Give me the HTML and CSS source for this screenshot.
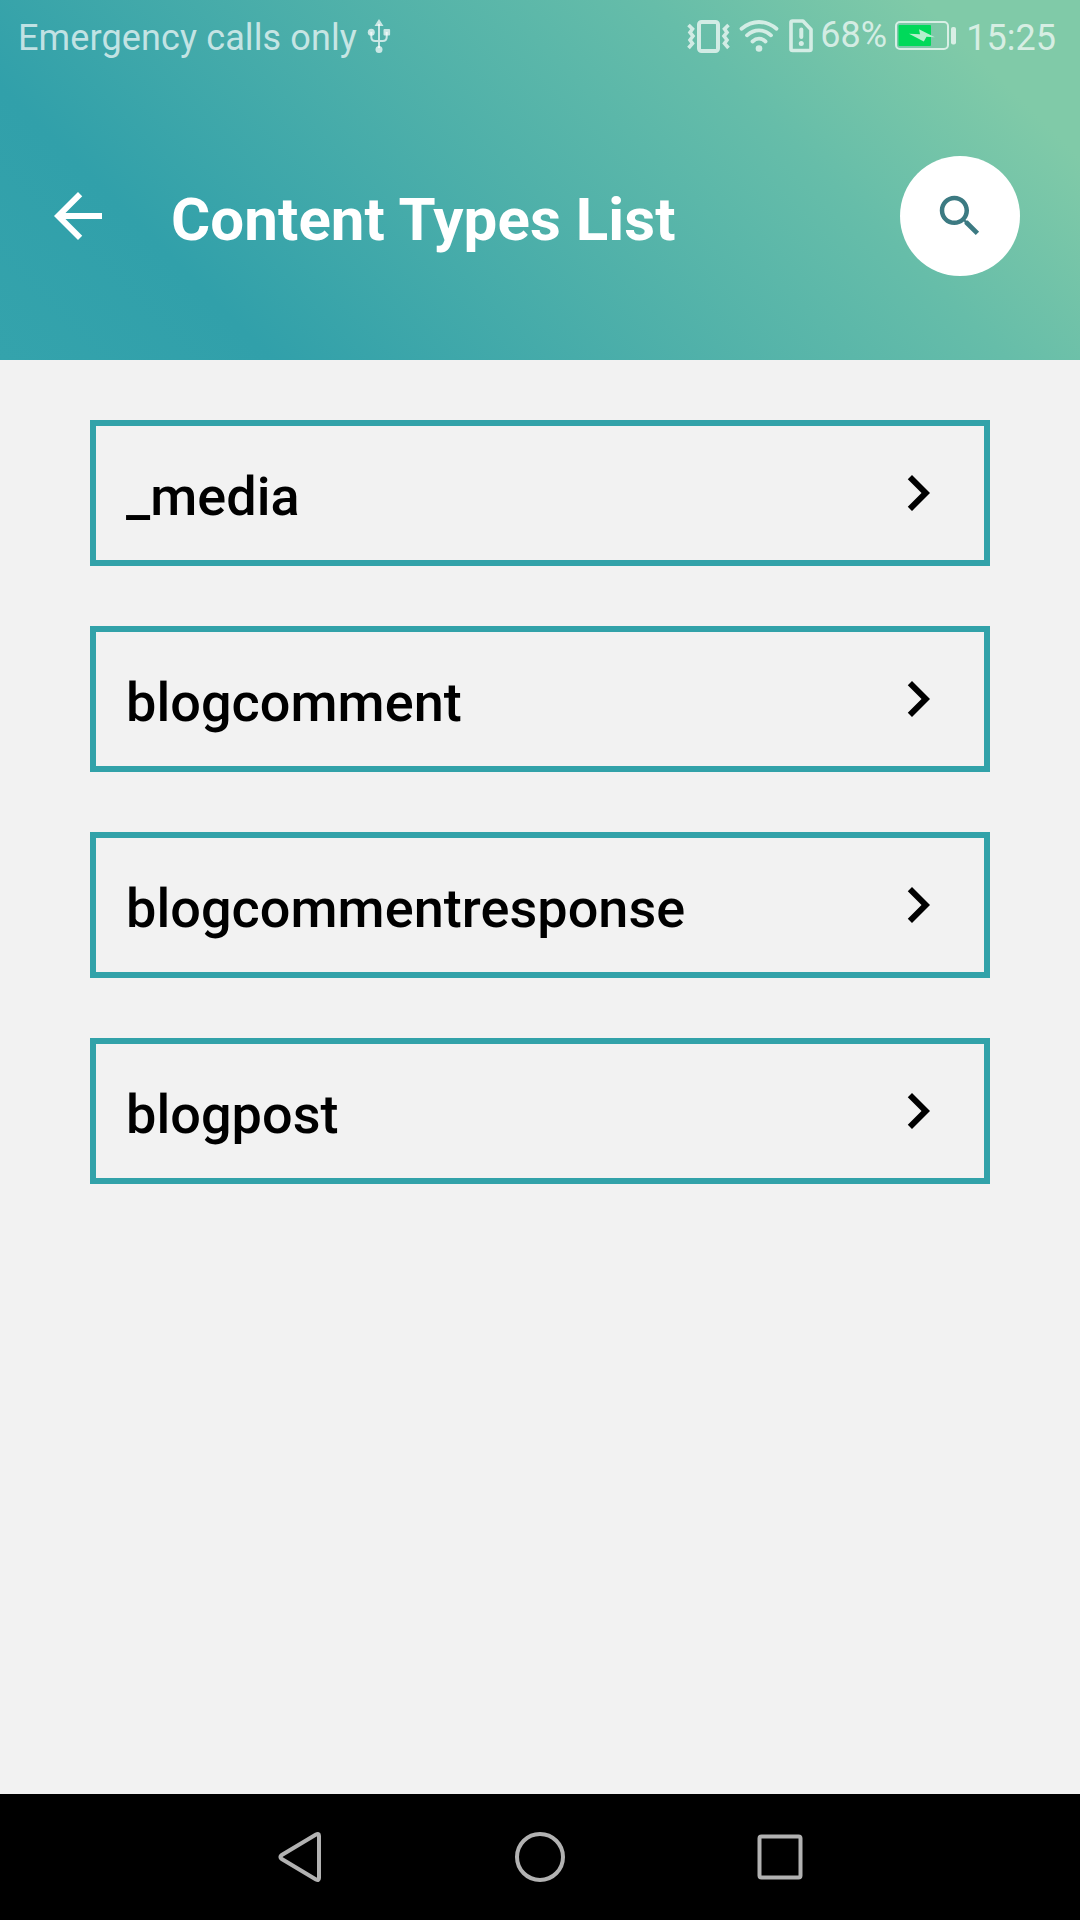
FILE: index.html
```html
<!DOCTYPE html>
<html lang="en">
<head>
<meta charset="utf-8">
<title>Content Types List</title>
<link rel="stylesheet" href="styles.css">
</head>
<body>
<div class="screen">
  <header class="header">
    <div class="status-bar">
      <span class="carrier">Emergency calls only</span>
      <svg class="icon-usb" viewBox="0 0 24 36" width="24" height="36">
        <g fill="none" stroke="currentColor" stroke-width="2">
          <path d="M12 6v24M4.300 14v5q0 4 4 4h7.400q4 0 4-4v-5"/>
        </g>
        <path fill="currentColor" d="M12 1l4.500 7h-9z"/>
        <circle fill="currentColor" cx="4.300" cy="14.300" r="3.500"/>
        <rect fill="currentColor" x="16.500" y="11" width="6.600" height="6.600" rx="1"/>
        <circle fill="currentColor" cx="12" cy="31.500" r="3.500"/>
      </svg>
      <span class="spacer"></span>
      <svg class="icon-vibrate" viewBox="0 0 44 36" width="44" height="36">
        <rect x="12" y="4" width="19" height="29" rx="2.500" fill="none" stroke="currentColor" stroke-width="4"/>
        <g fill="none" stroke="currentColor" stroke-width="3.600">
          <path d="M1.500 7l4 4-2.500 3.500 3 3.500-3 4 2.500 3.500-4 4.500"/>
          <path d="M41.500 7l-4 4 2.500 3.500-3 3.500 3 4-2.500 3.500 4 4.500"/>
        </g>
      </svg>
      <svg class="icon-wifi" viewBox="0 0 40 36" width="40" height="36">
        <g fill="none" stroke="currentColor" stroke-width="3.800" stroke-linecap="round">
          <path d="M2.500 10.700Q11 4 20 4T37.500 10.700"/>
          <path d="M8 17.300Q13.500 12.300 20 12.300T32 17.300"/>
          <path d="M13.500 23.500Q16.500 20.700 20 20.700T26.500 23.500"/>
        </g>
        <circle fill="currentColor" cx="20" cy="30.500" r="3.300"/>
      </svg>
      <svg class="icon-sim" viewBox="0 0 26 36" width="26" height="36">
        <path d="M4.500 3h10.500L23 11.500V31q0 1.500-1.500 1.500H4.500Q3 32.500 3 31V4.500Q3 3 4.500 3z" fill="none" stroke="currentColor" stroke-width="3.600" stroke-linejoin="round"/>
        <path d="M13.300 11.500v7.500" stroke="currentColor" stroke-width="4" stroke-linecap="round"/>
        <circle fill="currentColor" cx="13.300" cy="25.500" r="2.500"/>
      </svg>
      <span class="percent">68%</span>
      <svg class="icon-battery" viewBox="0 0 62 30" width="62" height="30">
        <rect x="1" y="1" width="52" height="27" rx="4" fill="none" stroke="currentColor" stroke-width="2"/>
        <rect x="56" y="6" width="5" height="17.500" rx="2" fill="currentColor"/>
        <rect class="charge" x="3.500" y="4" width="32.500" height="21" rx="1"/>
        <path class="bolt" d="M14 12.700l11 .5-1-5 9.500 4.800 6.500 3.300-8.500-.5-2.700 4.700z"/>
      </svg>
      <span class="clock">15:25</span>
    </div>
    <div class="toolbar">
      <svg class="icon-back" viewBox="0 0 24 24" width="72" height="72"><path fill="currentColor" d="M20 11H7.830l5.590-5.590L12 4l-8 8 8 8 1.410-1.410L7.830 13H20v-2z"/></svg>
      <h1 class="title">Content Types List</h1>
      <button class="search" aria-label="Search">
        <svg viewBox="0 0 24 24" width="54" height="54"><path fill="currentColor" d="M15.500 14h-.790l-.280-.270C15.410 12.590 16 11.110 16 9.500 16 5.910 13.090 3 9.500 3S3 5.910 3 9.500 5.910 16 9.500 16c1.610 0 3.090-.590 4.230-1.570l.270.280v.790l5 4.990L20.490 19l-4.990-5zm-6 0C7.010 14 5 11.990 5 9.500S7.010 5 9.500 5 14 7.010 14 9.500 11.990 14 9.500 14z"/></svg>
      </button>
    </div>
  </header>
  <main class="list">
    <a class="item"><span class="label">_media</span><svg viewBox="0 0 24 24" width="72" height="72"><path d="M8.590 16.590L13.170 12 8.590 7.410 10 6l6 6-6 6z"/></svg></a>
    <a class="item"><span class="label">blogcomment</span><svg viewBox="0 0 24 24" width="72" height="72"><path d="M8.590 16.590L13.170 12 8.590 7.410 10 6l6 6-6 6z"/></svg></a>
    <a class="item"><span class="label">blogcommentresponse</span><svg viewBox="0 0 24 24" width="72" height="72"><path d="M8.590 16.590L13.170 12 8.590 7.410 10 6l6 6-6 6z"/></svg></a>
    <a class="item"><span class="label">blogpost</span><svg viewBox="0 0 24 24" width="72" height="72"><path d="M8.590 16.590L13.170 12 8.590 7.410 10 6l6 6-6 6z"/></svg></a>
  </main>
  <nav class="nav-bar">
    <svg viewBox="0 0 60 60" width="60" height="60"><path d="M36 7.600Q39 6 39 9V51Q39 54 36 52.400L1.800 32Q-1 30 1.800 28z" transform="translate(10 0)"/></svg>
    <svg viewBox="0 0 60 60" width="60" height="60"><circle cx="30" cy="30" r="23"/></svg>
    <svg viewBox="0 0 60 60" width="60" height="60"><rect x="9.500" y="9.500" width="41" height="41" rx="2"/></svg>
  </nav>
</div>
</body>
</html>
```
FILE: styles.css
```css
* {
  box-sizing: border-box;
}

body {
  margin: 0;
  font-family: Roboto, "Liberation Sans", sans-serif;
}

.screen {
  display: flex;
  flex-direction: column;
  width: 1080px;
  height: 1920px;
  background: #f2f2f2;
}

.header {
  height: 360px;
  background: linear-gradient(45deg, #34a3ac 0%, #31a0aa 19%, #66bda9 70%, #80caa8 89%, #80caa8 100%);
}

.status-bar {
  display: flex;
  align-items: flex-start;
  height: 72px;
  padding: 18px 24px 0 18px;
  color: rgba(255, 255, 255, 0.7);
  font-size: 36px;
  line-height: 40px;
  white-space: nowrap;
}

.carrier {
  letter-spacing: 0.12px;
}

.spacer {
  flex: 1;
}

.icon-usb {
  margin-left: 10px;
}

.icon-vibrate {
  margin-right: 8px;
}

.icon-wifi {
  margin-right: 9px;
}

.icon-sim {
  margin-right: 6px;
}

.percent {
  width: 66px;
  margin-top: -3px;
}

.icon-battery {
  margin: 3px 9px 0 9px;
}

.charge {
  fill: #00d95a;
}

.bolt {
  fill: #b4f0cd;
}

.toolbar {
  display: flex;
  align-items: center;
  height: 288px;
  padding: 0 60px 0 42px;
  color: #fff;
}

.title {
  flex: 1;
  margin: 8px 0 0 57px;
  font-size: 60px;
  font-weight: 700;
  letter-spacing: 0.08px;
  line-height: 72px;
}

.search {
  display: grid;
  place-items: center;
  width: 120px;
  height: 120px;
  padding: 0;
  border: 0;
  border-radius: 50%;
  background: #fff;
  color: #3c7a82;
}

.list {
  display: flex;
  flex: 1;
  flex-direction: column;
  gap: 60px;
  padding: 60px 90px;
}

.item {
  display: flex;
  align-items: center;
  justify-content: space-between;
  height: 146px;
  padding: 0 30px;
  border: 6px solid #32a2a9;
  color: #000;
}

.label {
  padding-top: 8px;
  font-size: 54px;
  font-weight: 500;
  letter-spacing: 0.05px;
  line-height: 64px;
}

.nav-bar {
  display: flex;
  align-items: center;
  justify-content: center;
  gap: 180px;
  height: 126px;
  background: #000;
}

.nav-bar svg {
  fill: none;
  stroke: #b2b2b2;
  stroke-width: 4;
}
```
